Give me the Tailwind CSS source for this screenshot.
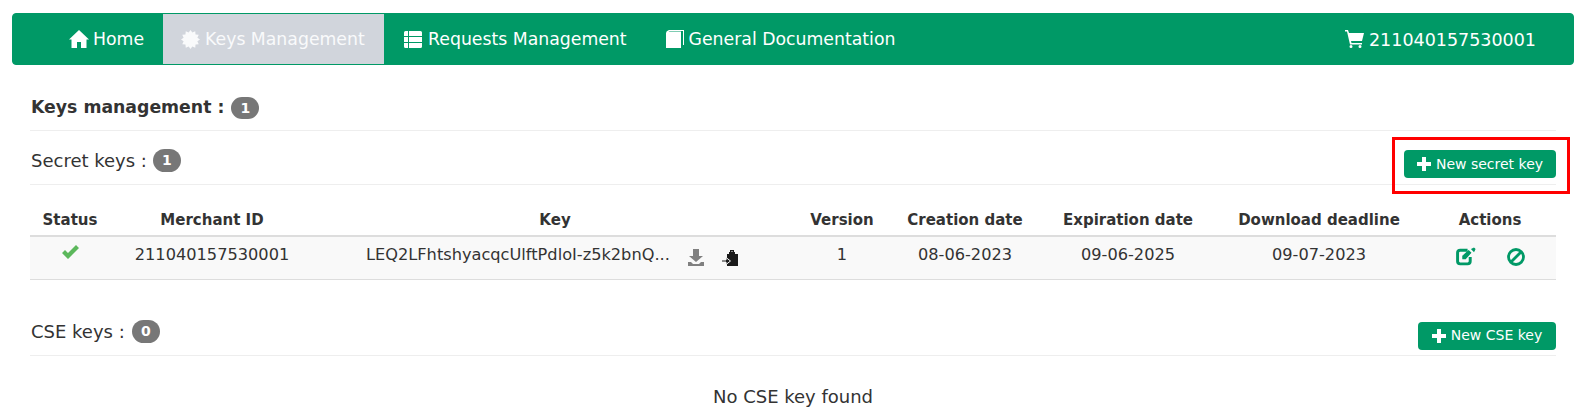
<!DOCTYPE html>
<html lang="en">
  <head>
    <meta charset="UTF-8" />
    <title>Keys management</title>
    <script src="https://cdn.jsdelivr.net/npm/@tailwindcss/browser@4"></script>
  </head>
  <body class="bg-white font-['DejaVu_Sans',sans-serif] text-[#333] text-[18px] overflow-hidden">
    <div class="pt-[13px] pl-[12px] pr-[12px]">
      <nav class="h-[52px] bg-[#009966] rounded-[4px] border border-[#009966] flex items-stretch justify-between pl-[48px] pr-[37px] text-white text-[17.3px]">
        <div class="flex items-stretch">
          <a class="flex items-center gap-[4px] pt-[2px] pl-[8px] pr-[19px]">
            <svg class="w-[20px] h-[18px] -mt-[2px]" viewBox="0 0 20 18" fill="currentColor"><path d="M10 0 L20 9.500 L17.500 9.500 L17.500 18 L12 18 L12 12 L8 12 L8 18 L2.500 18 L2.500 9.500 L0 9.500 Z"/></svg>
            Home
          </a>
          <a class="flex items-center gap-[5px] w-[221px] pt-[2px] pl-[18px] bg-gray-300 text-gray-50">
            <svg class="w-[19px] h-[19px] -mt-[2px]" viewBox="0 0 20 20" fill="currentColor"><polygon points="20,10 17.24,11.94 18.66,15 15.3,15.3 15,18.66 11.94,17.24 10,20 8.06,17.24 5,18.66 4.7,15.3 1.34,15 2.76,11.94 0,10 2.76,8.06 1.34,5 4.7,4.7 5,1.34 8.06,2.76 10,0 11.94,2.76 15,1.34 15.3,4.7 18.66,5 17.24,8.06"/></svg>
            Keys Management
          </a>
          <a class="flex items-center gap-[6px] pt-[2px] pl-[20px] pr-[20px]">
            <svg class="w-[18px] h-[17px] -mt-[2px]" viewBox="0 0 18 17" fill="currentColor"><path d="M0 1.500Q0 0 1.500 0H4v5H0zM5 0h11.500Q18 0 18 1.500V5H5zM0 6h4v5H0zM5 6h13v5H5zM0 12h4v5H1.500Q0 17 0 15.500zM5 12h13v3.500Q18 17 16.500 17H5z"/></svg>
            Requests Management
          </a>
          <a class="flex items-center gap-[5px] pt-[2px] pl-[19px]">
            <svg class="w-[18px] h-[18px] -mt-[2px]" viewBox="0 0 18 18" fill="currentColor"><path d="M3 0H18V15H17V1H3.500L2.500 1.500H15V18H0V3Q0 .800 3 0Z"/></svg>
            General Documentation
          </a>
        </div>
        <a class="flex items-center gap-[5px] pt-[2px] text-[17.5px]">
          <svg class="w-[19px] h-[18px] -mt-[2px]" viewBox="0 0 19 18" fill="currentColor"><path d="M0 0H3L4 3H19L17 11H6L6.500 13H17V14.500H5L2 1.500H0ZM6 15a1.500 1.500 0 1 1 0 3a1.500 1.500 0 1 1 0-3ZM15 15a1.500 1.500 0 1 1 0 3a1.500 1.500 0 1 1 0-3Z"/></svg>
          211040157530001
        </a>
      </nav>
    </div>

    <main class="px-[30px]">
      <div class="h-[66px] pt-[21px] pl-[1px] border-b border-[#eee] flex items-center gap-[7px] font-bold text-[17.3px]">
        <span>Keys management :</span>
        <span class="bg-[#777] text-white rounded-full text-[14px] w-[28px] h-[22px] flex items-center justify-center">1</span>
      </div>

      <div class="h-[54px] pt-[5px] pl-[1px] border-b border-[#eee] flex items-center justify-between relative">
        <div class="flex items-center gap-[6px]">
          <span>Secret keys :</span>
          <span class="bg-[#777] text-white font-bold rounded-full text-[14px] w-[28px] h-[23px] flex items-center justify-center">1</span>
        </div>
        <button class="w-[152px] h-[28px] mt-[8px] bg-[#009966] text-white text-[14px] rounded-[4px] flex items-center justify-center gap-[5px]">
          <svg class="w-[14px] h-[14px]" viewBox="0 0 14 14" fill="currentColor"><path d="M5 0h4v5h5v4H9v5H5V9H0V5h5z"/></svg>
          New secret key
        </button>
        <div class="absolute -right-[14px] top-[6px] w-[178px] h-[57px] border-[3px] border-[#f00]"></div>
      </div>

      <table class="w-full table-fixed mt-[19px] text-[16.2px] text-center">
        <thead>
          <tr class="h-[32px] border-b-2 border-[#ddd] text-[15px]">
            <th class="w-[80px] pt-[2px]">Status</th>
            <th class="w-[204px] pt-[2px]">Merchant ID</th>
            <th class="w-[482px] pt-[2px]">Key</th>
            <th class="w-[92px] pt-[2px]">Version</th>
            <th class="w-[154px] pt-[2px]">Creation date</th>
            <th class="w-[172px] pt-[2px]">Expiration date</th>
            <th class="w-[210px] pt-[2px]">Download deadline</th>
            <th class="pt-[2px]">Actions</th>
          </tr>
        </thead>
        <tbody>
          <tr class="h-[43px] bg-[#f9f9f9] border-b border-[#ddd] align-top">
            <td class="pt-[8px]">
              <svg class="w-[17px] h-[14px] mx-auto" viewBox="0 0 17 14" fill="#5cb85c"><path d="M0 8l3-3 3 3 8-8 3 3L6 14z"/></svg>
            </td>
            <td class="pt-[6px]">211040157530001</td>
            <td class="pt-[6px]">
              <div class="flex items-center pl-[52px]">
                <span>LEQ2LFhtshyacqcUlftPdloI-z5k2bnQ...</span>
                <svg class="w-[16px] h-[17px] ml-[18px] mt-[5px]" viewBox="0 0 16 17" fill="#808080"><path d="M5 0h6v7h4l-7 6-7-6h4zM0 13h3l2 2h6l2-2h3v4H0z"/></svg>
                <svg class="w-[17px] h-[16px] ml-[18px] mt-[5px]" viewBox="0 0 17 16"><path fill="#1a1a1a" d="M5 4h2V2h1V0h4v2h1v2h3v12H5z"/><path fill="#f9f9f9" d="M9.500 1h1v1h-1z"/><path fill="#1a1a1a" stroke="#f9f9f9" stroke-width="1" d="M-1 10h5V7.500l4.500 3.500L4 14.500V12H-1z"/></svg>
              </div>
            </td>
            <td class="pt-[6px]">1</td>
            <td class="pt-[6px]">08-06-2023</td>
            <td class="pt-[6px]">09-06-2025</td>
            <td class="pt-[6px]">09-07-2023</td>
            <td class="pt-[10px]">
              <div class="flex items-center justify-center gap-[31px]">
                <svg class="w-[20px] h-[19px]" viewBox="0 0 19 17" fill="none" stroke="#009966" stroke-width="2.800"><path d="M11 2.500H4Q1.500 2.500 1.500 5V13Q1.500 15.500 4 15.500H11Q13.500 15.500 13.500 13V9"/><path d="M6.500 10.500V8L12 3l2 2-5 5.500z" fill="#009966" stroke-width="1"/><path d="M15 1.500l2-1 1 1-1 2z" fill="#009966" stroke-width="1"/></svg>
                <svg class="w-[18px] h-[18px]" viewBox="0 0 18 18" fill="none" stroke="#009966" stroke-width="2.800"><circle cx="9" cy="9" r="7.500"/><path d="M4 14L14 4"/></svg>
              </div>
            </td>
          </tr>
        </tbody>
      </table>

      <div class="h-[76px] pt-[29px] pl-[1px] border-b border-[#eee] flex items-center justify-between">
        <div class="flex items-center gap-[7px]">
          <span>CSE keys :</span>
          <span class="bg-[#777] text-white font-bold rounded-full text-[14px] w-[28px] h-[23px] flex items-center justify-center">0</span>
        </div>
        <button class="w-[138px] h-[28px] mt-[8px] bg-[#009966] text-white text-[14px] rounded-[4px] flex items-center justify-center gap-[5px]">
          <svg class="w-[14px] h-[14px]" viewBox="0 0 14 14" fill="currentColor"><path d="M5 0h4v5h5v4H9v5H5V9H0V5h5z"/></svg>
          New CSE key
        </button>
      </div>

      <p class="text-center mt-[27px]">No CSE key found</p>
    </main>
  </body>
</html>
